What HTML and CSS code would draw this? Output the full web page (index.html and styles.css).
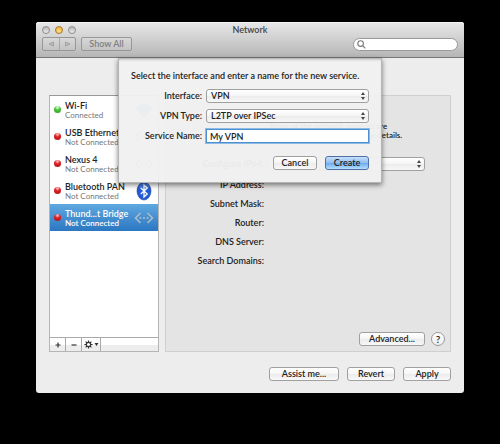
FILE: index.html
```
<!DOCTYPE html>
<html lang="en">
<head>
    <meta charset="UTF-8">
    <meta name="viewport" content="width=device-width, initial-scale=1.0">
    <title>Network</title>
    <link rel="stylesheet" href="styles.css">
</head>
<body>
    <main class="window">
        <header class="toolbar">
            <div class="titlebar">
                <div class="lights">
                    <button class="light" aria-label="Close"></button>
                    <button class="light amber" aria-label="Minimize"></button>
                    <button class="light" aria-label="Zoom"></button>
                </div>
                <h1>Network</h1>
            </div>
            <div class="tools">
                <div class="nav">
                    <button aria-label="Back"><svg width="8" height="6" viewBox="0 0 8 6"><path d="M6.5 1v4L2 3z"/></svg></button>
                    <button aria-label="Forward"><svg width="8" height="6" viewBox="0 0 8 6"><path d="M1.5 1v4L6 3z"/></svg></button>
                </div>
                <button class="show-all">Show All</button>
                <label class="search">
                    <svg width="9" height="9" viewBox="0 0 9 9"><circle cx="3.6" cy="3.6" r="2.8"/><path d="M5.6 5.6L8.3 8.3"/></svg>
                    <input type="search" aria-label="Search">
                </label>
            </div>
        </header>

        <div class="content">
            <section class="services">
                <ul>
                    <li>
                        <span class="dot green"></span>
                        <div class="service"><b>Wi-Fi</b><small>Connected</small></div>
                        <svg class="icon" width="20" height="20" viewBox="0 0 20 20"><path d="M1 8Q10 0 19 8L10 18z" fill="#5aa5f0"/></svg>
                    </li>
                    <li>
                        <span class="dot"></span>
                        <div class="service"><b>USB Ethernet</b><small>Not Connected</small></div>
                        <svg class="icon arrows" width="20" height="20" viewBox="0 0 20 20"><use href="#arrows"/></svg>
                    </li>
                    <li>
                        <span class="dot"></span>
                        <div class="service"><b>Nexus 4</b><small>Not Connected</small></div>
                        <svg class="icon arrows" width="20" height="20" viewBox="0 0 20 20"><use href="#arrows"/></svg>
                    </li>
                    <li>
                        <span class="dot"></span>
                        <div class="service"><b>Bluetooth PAN</b><small>Not Connected</small></div>
                        <svg class="icon" width="20" height="20" viewBox="0 0 20 20">
                            <ellipse cx="10" cy="10" rx="7" ry="9" fill="#2459d7" stroke="#1a459d" stroke-width=".6"/>
                            <ellipse cx="10" cy="5.5" rx="5" ry="3.5" fill="#6b9cf0" opacity=".5"/>
                            <path d="M6.8 7l6.4 6-3.2 3V4l3.2 3-6.4 6" fill="none" stroke="#fff" stroke-width="1.3"/>
                        </svg>
                    </li>
                    <li class="selected">
                        <span class="dot"></span>
                        <div class="service"><b>Thund...t Bridge</b><small>Not Connected</small></div>
                        <svg class="icon arrows" width="20" height="20" viewBox="0 0 20 20">
                            <g id="arrows">
                                <path d="M6.5 5L1.5 10l5 5M13.5 5l5 5-5 5"/>
                                <path d="M5.4 10h2M9 10h2M12.6 10h2"/>
                            </g>
                        </svg>
                    </li>
                </ul>
                <div class="list-bar">
                    <button aria-label="Add service"><svg width="8" height="8" viewBox="0 0 8 8"><path d="M4 1.5v5M1.5 4h5"/></svg></button>
                    <button aria-label="Remove service"><svg width="8" height="8" viewBox="0 0 8 8"><path d="M1.5 4h5"/></svg></button>
                    <button class="gear" aria-label="Service actions">
                        <svg width="15" height="9" viewBox="0 0 15 9">
                            <circle cx="4.5" cy="4.5" r="2.2"/>
                            <path d="M4.5 .4v1.8M4.5 6.8v1.8M.4 4.5h1.8M6.8 4.5h1.8M1.6 1.6l1.3 1.3M6.1 6.1l1.3 1.3M1.6 7.4l1.3-1.3M6.1 2.9l1.3-1.3"/>
                            <path class="solid" d="M10.5 3h4l-2 3z"/>
                        </svg>
                    </button>
                </div>
            </section>

            <section class="details">
                <p class="hint">None of the network services are<br>set up. Click Advanced for the details.</p>
                <div class="row">
                    <label for="configure">Configure IPv4:</label>
                    <div class="select"><select id="configure"><option></option></select></div>
                </div>
                <dl>
                    <dt>IP Address:</dt>
                    <dt>Subnet Mask:</dt>
                    <dt>Router:</dt>
                    <dt>DNS Server:</dt>
                    <dt>Search Domains:</dt>
                </dl>
                <div class="details-actions">
                    <button class="btn">Advanced...</button>
                    <button class="help" aria-label="Help">?</button>
                </div>
            </section>
        </div>

        <footer>
            <button class="btn assist">Assist me...</button>
            <button class="btn">Revert</button>
            <button class="btn">Apply</button>
        </footer>

        <form class="sheet">
            <p>Select the interface and enter a name for the new service.</p>
            <div class="fields">
                <label for="interface">Interface:</label>
                <div class="select"><select id="interface"><option>VPN</option></select></div>
                <label for="vpn-type">VPN Type:</label>
                <div class="select"><select id="vpn-type"><option>L2TP over IPSec</option></select></div>
                <label for="service-name">Service Name:</label>
                <input type="text" id="service-name" value="My VPN">
            </div>
            <div class="sheet-actions">
                <button type="button" class="btn">Cancel</button>
                <button type="button" class="btn primary">Create</button>
            </div>
        </form>
    </main>
</body>
</html>
```

FILE: styles.css
```
* {
    box-sizing: border-box;
}
body {
    margin: 0;
    padding: 22px 36px 0;
    background: #000;
    font-family: "Lucida Grande", Lato, sans-serif;
    font-size: 9px;
    font-weight: 600;
    line-height: 12px;
    color: #222;
}
button, input, select {
    font: inherit;
    color: inherit;
    margin: 0;
    padding: 0;
}
h1, p, ul, dl {
    margin: 0;
    padding: 0;
}
.window {
    position: relative;
    background: #ededed;
    border-radius: 3px;
}

/* toolbar */
.toolbar {
    height: 36px;
    padding: 0 6px;
    border-radius: 3px 3px 0 0;
    border-bottom: 1px solid #777;
    background: linear-gradient(#e8e8e8, #b6b6b6);
    box-shadow: inset 0 1px #f5f5f5;
}
.titlebar {
    display: grid;
    grid-template-columns: 1fr auto 1fr;
    align-items: center;
    height: 15px;
}
.titlebar h1 {
    font-size: 9px;
    font-weight: 600;
    color: #444;
}
.lights {
    display: flex;
    gap: 5px;
}
.light {
    width: 8px;
    height: 8px;
    border: 1px solid #8c8c8c;
    border-radius: 50%;
    background: linear-gradient(#b5b5b5, #eee);
}
.light.amber {
    border-color: #a8752a;
    background: radial-gradient(circle at 50% 80%, #ffe680, #eda52c);
}
.tools {
    display: flex;
    align-items: center;
    gap: 5px;
}
.nav {
    display: flex;
    border: 1px solid #979797;
    border-radius: 2px;
    background: linear-gradient(#d8d8d8, #c3c3c3);
}
.nav button {
    display: flex;
    align-items: center;
    justify-content: center;
    width: 16px;
    height: 12px;
    border: 0;
    background: none;
}
.nav button + button {
    border-left: 1px solid #a8a8a8;
}
.nav path {
    fill: #bbb;
    stroke: #a2a2a2;
    stroke-width: 1;
}
.show-all {
    height: 14px;
    width: 51px;
    line-height: 12px;
    border: 1px solid #979797;
    border-radius: 2px;
    background: linear-gradient(#d8d8d8, #c3c3c3);
    color: #808080;
}
.search {
    display: flex;
    align-items: center;
    gap: 3px;
    width: 105px;
    height: 13px;
    margin-left: auto;
    padding: 0 3px;
    border: 1px solid #999;
    border-radius: 7px;
    background: #fff;
}
.search input {
    flex: 1;
    min-width: 0;
    border: 0;
    outline: 0;
    background: none;
    appearance: none;
}
.search svg {
    fill: none;
    stroke: #777;
    stroke-width: 1.1;
}

/* main area */
.content {
    display: grid;
    grid-template-columns: 110px 1fr;
    gap: 6px;
    padding: 37px 13px 0;
}
.services {
    display: flex;
    flex-direction: column;
    border: 1px solid #b5b5b5;
    border-top-color: #999;
    background: #fff;
}
.services ul {
    flex: 1;
    list-style: none;
}
.services li {
    display: flex;
    align-items: center;
    gap: 4px;
    height: 27px;
    padding: 0 4px;
}
.services li.selected {
    background: linear-gradient(#5fa8e0, #2b77c2);
    color: #fff;
}
.service {
    flex: 1;
    white-space: nowrap;
}
.service b, .service small {
    display: block;
    font-weight: 600;
    line-height: 10px;
}
.service small {
    font-size: 8px;
    font-weight: 400;
    line-height: 8px;
    color: #777;
}
.selected small {
    font-weight: 600;
    color: #fff;
}
.dot {
    width: 7px;
    height: 7px;
    border-radius: 50%;
    background: radial-gradient(circle at 50% 20%, #fbb 5%, #d81e24 40%, #b3131a);
}
.dot.green {
    background: radial-gradient(circle at 50% 20%, #dfd 5%, #4cc43a 40%, #2f9a22);
}
.icon {
    flex: none;
    margin-left: -12px;
}
.arrows {
    fill: none;
    stroke: #888;
    stroke-width: 1.4;
}
.selected .arrows {
    stroke: #b4bfc9;
}
.list-bar {
    display: flex;
    height: 14px;
    border-top: 1px solid #aaa;
    background: linear-gradient(#fff 50%, #ededed 50%);
}
.list-bar button {
    display: flex;
    align-items: center;
    justify-content: center;
    width: 16px;
    border: 0;
    border-right: 1px solid #aaa;
    background: none;
}
.list-bar .gear {
    width: 19px;
}
.list-bar path, .list-bar circle {
    fill: none;
    stroke: #333;
    stroke-width: 1.2;
}
.list-bar .solid {
    fill: #333;
    stroke: none;
}
.details {
    display: flex;
    flex-direction: column;
    height: 257px;
    padding: 26px 5px 5px 12px;
    border: 1px solid #cfcfcf;
    background: #e4e4e4;
}
.hint {
    height: 35px;
    padding-left: 92px;
    font-size: 8px;
    line-height: 9px;
    white-space: nowrap;
}
.row {
    display: grid;
    grid-template-columns: 86px 1fr;
    gap: 4px;
    align-items: center;
    padding-right: 20px;
    text-align: right;
}
dl {
    width: 86px;
    margin-top: 4px;
    text-align: right;
    white-space: nowrap;
}
dt {
    line-height: 19px;
}
.details-actions {
    display: flex;
    justify-content: flex-end;
    align-items: center;
    gap: 6px;
    margin-top: auto;
}
.details-actions .btn {
    min-width: 66px;
}
.help {
    width: 14px;
    height: 14px;
    border: 1px solid #999;
    border-radius: 50%;
    background: linear-gradient(#fff, #eee);
    font-size: 10px;
    line-height: 12px;
}

/* controls */
.btn {
    height: 14px;
    min-width: 48px;
    padding: 0 6px;
    border: 1px solid #a0a0a0;
    border-radius: 3px;
    background: linear-gradient(#fff, #f5f5f5 50%, #ebebeb 50%, #f8f8f8);
    line-height: 12px;
    white-space: nowrap;
}
.btn.primary {
    border-color: #5270a8;
    background: linear-gradient(#c8e0fa, #8fbdf2 50%, #6ba9ee 50%, #b4e0ff);
}
.select {
    display: grid;
    align-items: center;
}
.select::after {
    content: "";
    grid-area: 1 / 1;
    justify-self: end;
    width: 4px;
    height: 8px;
    margin-right: 4px;
    background: #444;
    clip-path: polygon(50% 0, 100% 38%, 0 38%, 0 62%, 100% 62%, 50% 100%, 0 62%, 0 38%);
    pointer-events: none;
}
.select select {
    grid-area: 1 / 1;
    width: 100%;
    height: 14px;
    padding: 0 4px;
    appearance: none;
    border: 1px solid #a0a0a0;
    border-radius: 3px;
    background: linear-gradient(#fff, #f5f5f5 50%, #ebebeb 50%, #f8f8f8);
    line-height: 12px;
}
footer {
    display: flex;
    justify-content: flex-end;
    gap: 8px;
    padding: 15px 13px 12px;
}
.assist {
    min-width: 70px;
}

/* sheet */
.sheet {
    position: absolute;
    top: 36px;
    left: 50%;
    width: 264px;
    margin-left: -132px;
    padding: 12px;
    border: 1px solid #b5b5b5;
    border-top: 0;
    background: rgba(240, 240, 240, 0.96);
    box-shadow: 0 2px 5px rgba(0, 0, 0, 0.5), inset 0 3px 3px -2px rgba(0, 0, 0, 0.35);
}
.sheet p {
    white-space: nowrap;
}
.fields {
    display: grid;
    grid-template-columns: 71px 1fr;
    gap: 6px 4px;
    align-items: center;
    margin-top: 7px;
}
.fields label {
    text-align: right;
    white-space: nowrap;
}
.fields input {
    width: 100%;
    height: 14px;
    padding: 0 3px;
    border: 1px solid #4f8fd0;
    outline: 1px solid #8dbbe8;
    background: #fff;
}
.sheet-actions {
    display: flex;
    justify-content: flex-end;
    gap: 8px;
    margin-top: 13px;
}
.sheet-actions .btn {
    min-width: 44px;
}
```
